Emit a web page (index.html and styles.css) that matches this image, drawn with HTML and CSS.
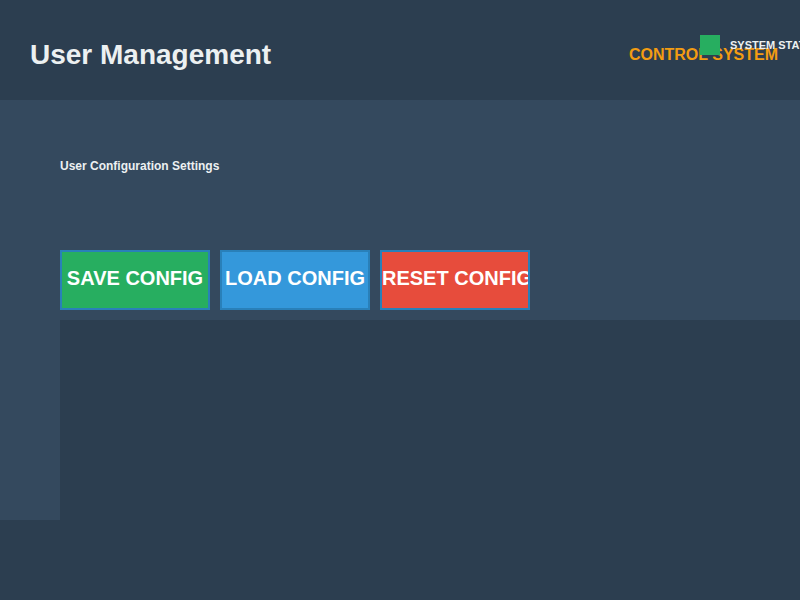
FILE: index.html
```html
<!DOCTYPE html>
<html>
<head>
<meta charset="utf-8">
<link rel="stylesheet" href="styles.css">
</head>
<body>
<header class="header">
  <h1 class="title">User Management</h1>
  <div class="brand">CONTROL SYSTEM</div>
  <div class="status"><span class="status-dot"></span><span class="status-text">SYSTEM STATUS: ONLINE</span></div>
</header>
<main class="main">
  <div class="section-label">User Configuration Settings</div>
  <div class="actions">
    <button class="btn btn-save">SAVE CONFIG</button>
    <button class="btn btn-load">LOAD CONFIG</button>
    <button class="btn btn-reset">RESET CONFIG</button>
  </div>
  <div class="content"></div>
</main>
</body>
</html>
```
FILE: styles.css
```css
html, body {
  margin: 0;
  padding: 0;
  background: #2c3e50;
  font-family: "Liberation Sans", Arial, sans-serif;
  overflow: hidden;
  width: 800px;
  height: 600px;
}
.header {
  position: relative;
  height: 100px;
  box-sizing: border-box;
  display: flex;
  align-items: center;
  padding: 10px 22px 0 30px;
  background: #2c3e50;
  overflow: hidden;
}
.title {
  margin: 0;
  font-size: 28px;
  font-weight: bold;
  color: #ecf0f1;
}
.brand {
  margin-left: auto;
  color: #f39c12;
  font-size: 16px;
  font-weight: bold;
}
.status {
  position: absolute;
  left: 700px;
  top: 35px;
  display: flex;
  align-items: center;
  white-space: nowrap;
}
.status-dot {
  width: 20px;
  height: 20px;
  background: #27ae60;
}
.status-text {
  margin-left: 10px;
  color: #ecf0f1;
  font-size: 11px;
  font-weight: bold;
}
.main {
  background: #34495e;
  height: 420px;
  padding-left: 60px;
  box-sizing: border-box;
  padding-top: 59px;
}
.section-label {
  color: #ecf0f1;
  font-size: 12px;
  font-weight: bold;
  line-height: 14px;
}
.actions {
  display: flex;
  gap: 10px;
  margin-top: 77px;
}
.btn {
  width: 150px;
  height: 60px;
  border: 2px solid #2980b9;
  color: #fff;
  font-family: "Liberation Sans", Arial, sans-serif;
  font-size: 20px;
  font-weight: bold;
  padding: 0 0 4px 0;
  white-space: nowrap;
  overflow: hidden;
}
.btn-save { background: #27ae60; }
.btn-load { background: #3498db; }
.btn-reset { background: #e74c3c; }
.content {
  margin-top: 10px;
  height: 200px;
  background: #2c3e50;
}
```
